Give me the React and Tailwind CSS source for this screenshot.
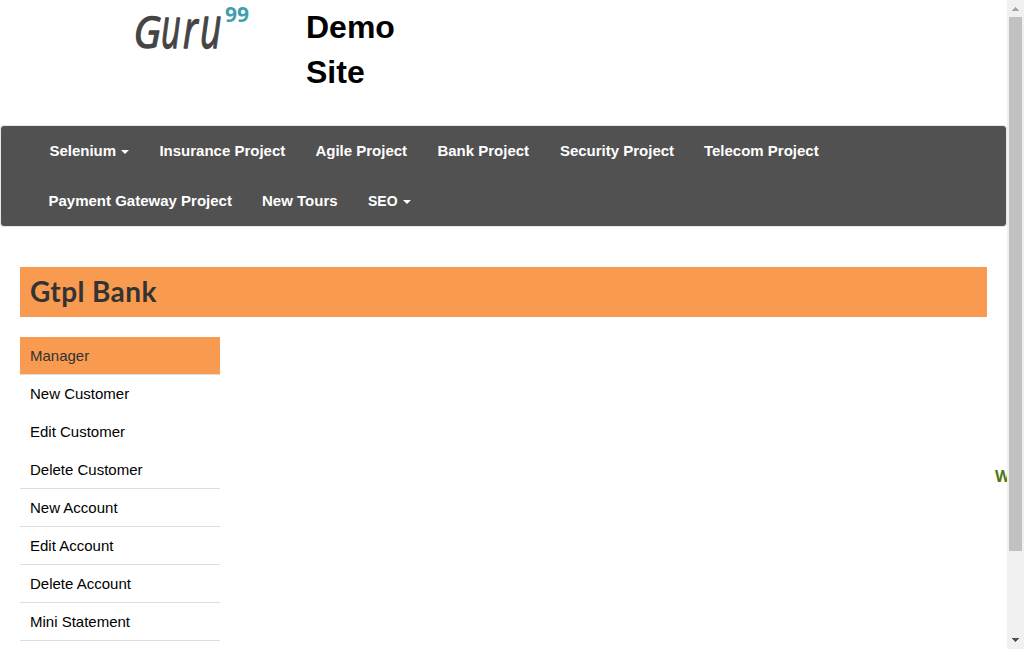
const firstRow = [
  { label: "Selenium", menu: true, box: "w-[110px]" },
  { label: "Insurance Project", box: "w-[156px]" },
  { label: "Agile Project", box: "w-[122px]" },
  { label: "Bank Project", box: "w-[122.5px]" },
  { label: "Security Project", box: "w-[144px]" },
  { label: "Telecom Project", box: "w-[145px]" },
];

const secondRow = [
  { label: "Payment Gateway Project", box: "w-[213.5px]" },
  { label: "New Tours", box: "w-[106px]" },
  { label: "SEO", menu: true, box: "w-[74px]", text: "text-[14px]" },
];

const links = [
  { label: "New Customer", line: "border-transparent" },
  { label: "Edit Customer", line: "border-transparent" },
  { label: "Delete Customer", line: "border-[#ddd]" },
  { label: "New Account", line: "border-[#ddd]" },
  { label: "Edit Account", line: "border-[#ddd]" },
  { label: "Delete Account", line: "border-[#ddd]" },
  { label: "Mini Statement", line: "border-[#ddd]" },
];

function Logo() {
  return (
    <svg width="120" height="54" viewBox="0 0 120 54" className="shrink-0 overflow-visible" aria-label="Guru99">
      <g fill="#444" stroke="#444" strokeWidth="1.3" strokeLinejoin="round" fontFamily="'Open Sans', sans-serif" fontStyle="italic" fontWeight="400">
        <text transform="translate(1.5 48) scale(0.92 1)" fontSize="44">G</text>
        <text transform="translate(29 48) scale(0.61 1)" fontSize="56">u</text>
        <text transform="translate(51 48) scale(0.72 1)" fontSize="52">r</text>
        <text transform="translate(68 48) scale(0.63 1)" fontSize="59">u</text>
      </g>
      <text x="93" y="22" textLength="24" lengthAdjust="spacingAndGlyphs" fill="#419db0" fontFamily="'Open Sans', sans-serif" fontWeight="700" fontSize="21">99</text>
    </svg>
  );
}

function NavRow({ items, pad }) {
  return (
    <ul className={`flex h-[50px] items-center ${pad}`}>
      {items.map((item) => (
        <li key={item.label} className={`${item.box} ${item.text || "text-[15px]"} shrink-0 px-[15px]`}>
          <a href="#" className="flex items-center whitespace-nowrap leading-5">
            {item.label}
            {item.menu && (
              <span className="ml-[5px] mt-0.5 border-x-4 border-t-4 border-x-transparent border-t-white" />
            )}
          </a>
        </li>
      ))}
    </ul>
  );
}

export default function App() {
  return (
    <div className="flex h-[649px] w-[1024px] overflow-hidden bg-white font-['Liberation_Sans',Arial,sans-serif] text-black">
      <main className="w-[1007px] shrink-0 overflow-hidden">
        <header className="flex h-[125px] pl-[132px]">
          <Logo />
          <h1 className="ml-[54px] w-[120px] pt-[5px] text-[32px] font-bold leading-[45px]">Demo Site</h1>
        </header>
        <nav className="h-[102px] rounded border border-[#e7e7e7] bg-[#515151] font-bold text-white">
          <NavRow items={firstRow} pad="pl-[33.4px]" />
          <NavRow items={secondRow} pad="pl-[32.5px]" />
        </nav>
        <div className="mx-5 mt-10 flex h-[50px] w-[967px] items-start bg-[#f89b50] pl-2.5">
          <h2 className="font-['Lato',sans-serif] text-[28px] font-bold leading-[48px] tracking-[0.4px] text-[#333]">Gtpl Bank</h2>
        </div>
        <div className="ml-5 mt-5 flex">
          <ul className="w-[200px] shrink-0 text-[15px] leading-[37px]">
            <li className="h-[38px] border-b border-[#ddd] bg-[#f89b50] pl-2.5 text-[#333]">Manager</li>
            {links.map((link) => (
              <li key={link.label} className={`h-[38px] border-b pl-2.5 ${link.line}`}>
                <a href="#">{link.label}</a>
              </li>
            ))}
          </ul>
          <div className="ml-[775px] pt-[127px] font-['Open_Sans',sans-serif] text-[16px] font-bold leading-6 text-[#4b7a18]">
            W
          </div>
        </div>
      </main>
      <aside className="flex w-[17px] shrink-0 flex-col items-center bg-[#f0f0f0]">
        <svg width="17" height="17" viewBox="0 0 17 17" className="shrink-0" shapeRendering="crispEdges">
          <path d="M5 11h7v-1h-1v-1h-1v-1h-1v-1h-1v1h-1v1h-1v1h-1z" fill="#a3a3a3" />
        </svg>
        <div className="ml-[-1px] h-[534px] w-[13px] bg-[#c1c1c1]" />
        <svg width="17" height="17" viewBox="0 0 17 17" className="mt-auto shrink-0" shapeRendering="crispEdges">
          <path d="M5 6h7v1h-1v1h-1v1h-1v1h-1v-1h-1v-1h-1v-1h-1z" fill="#505050" />
        </svg>
      </aside>
    </div>
  );
}
